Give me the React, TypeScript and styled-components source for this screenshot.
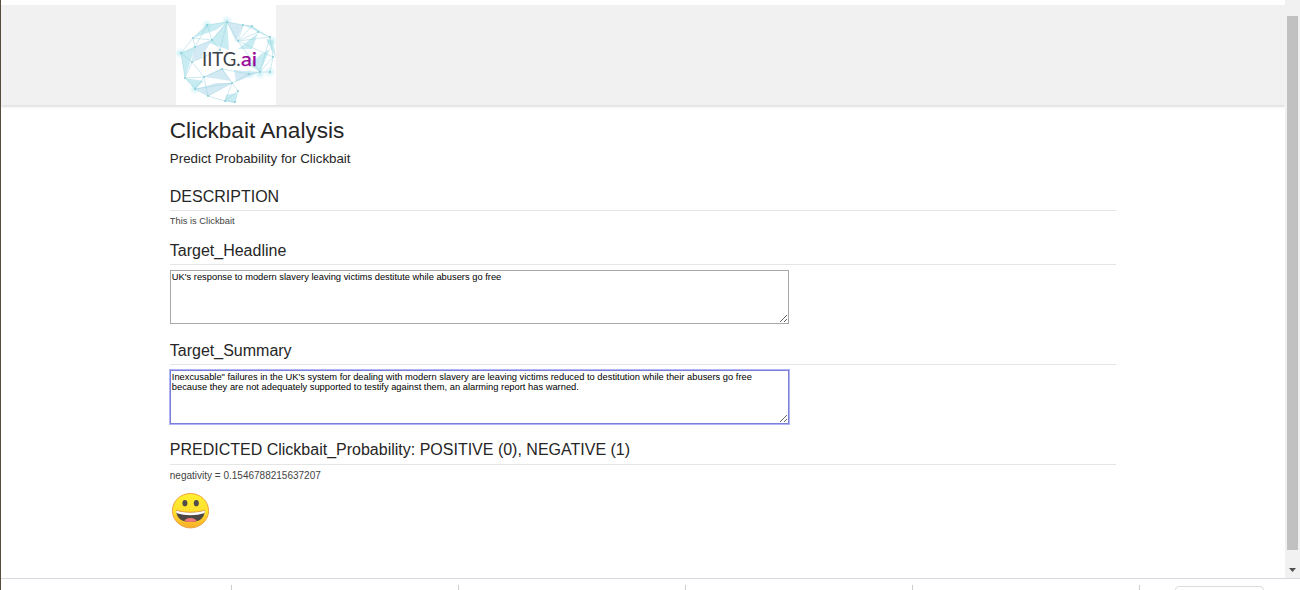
import React from 'react';
import styled, { createGlobalStyle } from 'styled-components';

const GlobalStyle = createGlobalStyle`
  * { box-sizing: border-box; }
  body {
    margin: 0;
    overflow: hidden;
    background: #fff;
    color: #262626;
    font-family: "Liberation Sans", Arial, sans-serif;
  }
`;

const Window = styled.div`
  height: 590px;
  display: flex;
  flex-direction: column;
  border-left: 1px solid #574b3b;
  overflow: hidden;
`;

const Viewport = styled.div`
  height: 578px;
  flex: none;
  display: flex;
`;

const Page = styled.div`
  flex: 1;
  min-width: 0;
  padding-top: 5px;
  overflow: hidden;
`;

const Header = styled.header`
  height: 100px;
  padding-left: 175px;
  background: #f1f1f1;
  box-shadow: 0 2px 2px rgba(0, 0, 0, 0.12);
`;

const LogoImage = styled.svg`
  display: block;
  width: 100px;
  height: 100px;
  background: #fff;
`;

const Content = styled.main`
  width: 946.2px;
  margin-left: 168.8px;
  padding-top: 12px;
`;

const Title = styled.h1`
  margin: 0;
  height: 27px;
  font-size: 22.6px;
  line-height: 27px;
  font-weight: 400;
`;

const Subtitle = styled.h2`
  margin: 6px 0 0;
  height: 17px;
  font-size: 13.33px;
  line-height: 17px;
  font-weight: 400;
`;

const Section = styled.section<{ $height: number }>`
  height: ${({ $height }) => $height}px;
`;

const Sections = styled.div`
  padding-top: 18px;
`;

const SectionTitle = styled.h3<{ $lineHeight?: number }>`
  margin: 0;
  height: 26px;
  border-bottom: 1px solid #e5e5e5;
  font-size: 16px;
  line-height: ${({ $lineHeight = 24 }) => $lineHeight}px;
  font-weight: 400;
`;

const Note = styled.p<{ $size: number }>`
  margin: 0;
  padding-top: 4px;
  color: #444;
  font-size: ${({ $size }) => $size}px;
  line-height: 13px;
`;

const Field = styled.textarea<{ $active?: boolean }>`
  display: block;
  width: 619px;
  height: 54px;
  margin: 5px 0 0;
  padding: 1px;
  border: 1px solid ${({ $active }) => ($active ? '#7b7fd6' : '#a9a9a9')};
  border-radius: 0;
  outline: 0;
  box-shadow: ${({ $active }) => ($active ? '0 0 0 1px #b1b5f5' : 'none')};
  background: #fff;
  color: #000;
  font: 9.33px/10px "Liberation Sans", Arial, sans-serif;
  resize: both;
`;

const Emoji = styled.svg`
  display: block;
  width: 40px;
  height: 40px;
  margin-top: 8px;
`;

const Scrollbar = styled.div`
  width: 15px;
  flex: none;
  display: flex;
  flex-direction: column;
  align-items: center;
  padding-top: 16px;
  background: #f1f1f1;
`;

const Thumb = styled.div`
  width: 11px;
  height: 534px;
  background: #c1c1c1;
`;

const Arrow = styled.svg`
  width: 7px;
  height: 4px;
  margin-top: 18px;
`;

const Taskbar = styled.footer`
  height: 12px;
  display: flex;
  padding-top: 6px;
  border-top: 1px solid #d8d7df;
`;

const Slot = styled.div<{ $width: number }>`
  width: ${({ $width }) => $width}px;
  height: 6px;
  border-right: 1px solid #ccc;
`;

const ShowAll = styled.div`
  width: 89px;
  height: 12px;
  margin-left: 35px;
  margin-top: 1px;
  border: 1px solid #dadce0;
  border-radius: 4px;
`;

const nodes = [
  [31, 20], [51, 17], [67, 20], [76, 21], [82, 27], [94, 32], [97, 52], [94, 67],
  [84, 67], [73, 69], [56, 78], [62, 86], [59, 97], [49, 96], [32, 91], [19, 84],
  [9, 73], [5, 48], [17, 33], [19, 42], [16, 57], [44, 45], [62, 36], [36, 35],
  [28, 72], [46, 64],
];

const links = [
  [0, 1], [1, 2], [2, 3], [3, 4], [4, 5], [5, 6], [6, 7], [7, 8], [8, 9], [9, 10],
  [10, 11], [11, 12], [12, 13], [13, 14], [14, 15], [15, 16], [16, 17], [17, 18], [18, 0],
  [0, 23], [1, 23], [1, 21], [1, 22], [2, 22], [4, 22], [5, 22], [3, 22], [18, 19],
  [17, 19], [19, 20], [19, 23], [23, 21], [20, 17], [20, 16], [20, 24], [16, 24],
  [15, 24], [24, 25], [24, 14], [25, 10], [14, 10], [13, 10], [13, 11], [25, 9],
  [22, 6], [22, 8], [5, 8], [6, 8], [0, 19], [21, 20], [15, 10], [23, 18],
];

function Logo() {
  return (
    <LogoImage viewBox="0 0 100 100" role="img" aria-label="IITG.ai">
      <defs>
        <radialGradient id="halo">
          <stop offset="0" stopColor="#98e0ea" stopOpacity=".55" />
          <stop offset="1" stopColor="#bceef5" stopOpacity="0" />
        </radialGradient>
      </defs>
      {[[51, 16], [31, 20], [4, 48], [19, 84], [84, 69], [94, 67], [96, 36], [74, 69]].map(([x, y], i) => (
        <circle key={i} cx={x} cy={y} r="6" fill="url(#halo)" />
      ))}
      <g fill="#a4e0ea" opacity=".6">
        <path d="M33 38 51 17 53 45Z" />
        <path d="M17 33 31 20 51 17 40 25Z" />
        <path d="M67 20 76 21 94 32Z" />
        <path d="M5 48 19 42 9 73Z" />
        <path d="M62 44 82 28 76 44Z" />
        <path d="M84 50 94 44 84 67 73 60Z" />
        <path d="M9 73 28 76 19 84Z" />
        <path d="M49 96 50 90 61 88 59 98Z" />
        <path d="M90 34 97 36 100 53Z" />
      </g>
      <g fill="#c5e3f1" opacity=".75">
        <path d="M19 42 36 35 25 53 17 56Z" />
        <path d="M51 17 67 20 60 37Z" />
        <path d="M28 72 46 63 55 76Z" />
        <path d="M20 84 40 78 56 78 32 91Z" />
        <path d="M58 65 84 67 60 77Z" />
      </g>
      <g stroke="#9bd3df" strokeWidth=".6" opacity=".8">
        {links.map(([a, b]) => (
          <line key={`${a}-${b}`} x1={nodes[a][0]} y1={nodes[a][1]} x2={nodes[b][0]} y2={nodes[b][1]} />
        ))}
      </g>
      {nodes.map(([x, y]) => (
        <circle key={`${x}-${y}`} cx={x} cy={y} r=".9" fill="#80ccd7" />
      ))}
      <text y="61" fontFamily="Lato, sans-serif" fontSize="18.5" fill="#3d4148">
        <tspan x="26" textLength="38.5" lengthAdjust="spacingAndGlyphs">IITG.</tspan>
        <tspan x="65" textLength="16" lengthAdjust="spacingAndGlyphs" fill="#970b98" stroke="#970b98" strokeWidth=".25">ai</tspan>
      </text>
    </LogoImage>
  );
}

function GrinningFace() {
  return (
    <Emoji viewBox="0 0 40 40" role="img" aria-label="Grinning face">
      <defs>
        <linearGradient id="face" x1="0" y1="0" x2="0" y2="1">
          <stop offset="0" stopColor="#fff02d" />
          <stop offset=".55" stopColor="#fde030" />
          <stop offset="1" stopColor="#f9ac27" />
        </linearGradient>
        <clipPath id="mouth">
          <path d="M6 20.5Q20.5 24.5 35 20.5Q34 32 20.5 32Q7 32 6 20.5Z" />
        </clipPath>
      </defs>
      <ellipse cx="20.5" cy="20.7" rx="18.1" ry="17.2" fill="url(#face)" stroke="#eda344" strokeWidth="1" />
      <ellipse cx="14.9" cy="13.2" rx="2.5" ry="3.1" fill="#504c49" />
      <ellipse cx="26.3" cy="13.2" rx="2.5" ry="3.1" fill="#504c49" />
      <g clipPath="url(#mouth)">
        <path d="M5 18h31v15H5z" fill="#4c4644" />
        <ellipse cx="20.5" cy="31" rx="6" ry="3" fill="#ef7777" />
        <path d="M5 18h31v4.8Q20.5 27.8 5 22.8Z" fill="#fff" />
      </g>
      <path d="M6 20.3Q20.5 24 35 20.3" fill="none" stroke="#eb9b38" strokeWidth=".8" />
    </Emoji>
  );
}

export default function App() {
  return (
    <>
      <GlobalStyle />
      <Window>
        <Viewport>
          <Page>
            <Header>
              <Logo />
            </Header>
            <Content>
              <Title>Clickbait Analysis</Title>
              <Subtitle>Predict Probability for Clickbait</Subtitle>
              <Sections>
                <Section $height={54}>
                  <SectionTitle>DESCRIPTION</SectionTitle>
                  <Note $size={9.33}>This is Clickbait</Note>
                </Section>
                <Section $height={100}>
                  <SectionTitle>Target_Headline</SectionTitle>
                  <Field spellCheck={false} defaultValue="UK's response to modern slavery leaving victims destitute while abusers go free" />
                </Section>
                <Section $height={100}>
                  <SectionTitle>Target_Summary</SectionTitle>
                  <Field
                    $active
                    spellCheck={false}
                    defaultValue={'Inexcusable" failures in the UK\'s system for dealing with modern slavery are leaving victims reduced to destitution while their abusers go free because they are not adequately supported to testify against them, an alarming report has warned.'}
                  />
                </Section>
                <Section $height={100}>
                  <SectionTitle $lineHeight={22}>PREDICTED Clickbait_Probability: POSITIVE (0), NEGATIVE (1)</SectionTitle>
                  <Note $size={10}>negativity = 0.1546788215637207</Note>
                  <GrinningFace />
                </Section>
              </Sections>
            </Content>
          </Page>
          <Scrollbar>
            <Thumb />
            <Arrow viewBox="0 0 7 4">
              <path d="M0 0h7L3.5 4z" fill="#505050" />
            </Arrow>
          </Scrollbar>
        </Viewport>
        <Taskbar>
          <Slot $width={231} />
          <Slot $width={227} />
          <Slot $width={227} />
          <Slot $width={227} />
          <Slot $width={227} />
          <ShowAll />
        </Taskbar>
      </Window>
    </>
  );
}
